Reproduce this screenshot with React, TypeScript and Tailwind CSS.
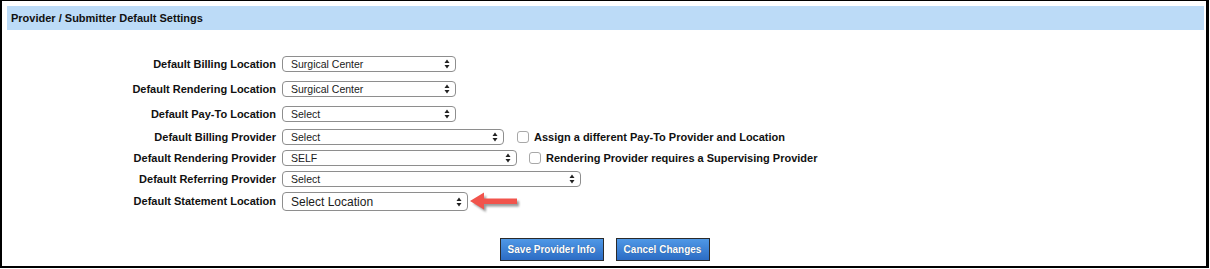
import React from 'react';

const font = "font-['Liberation_Sans',Arial,sans-serif]";

function Arrows() {
  return (
    <svg width="6" height="10" viewBox="0 0 6 10" className="shrink-0">
      <path d="M3 0.5 L5.5 4 L0.5 4 Z" fill="#222" />
      <path d="M3 9.5 L5.5 6 L0.5 6 Z" fill="#222" />
    </svg>
  );
}

function FakeSelect({ value, width, big }: { value: string; width: string; big?: boolean }) {
  return (
    <div
      className={`flex items-center justify-between rounded-[4px] border border-[#8e8e8e] bg-white pl-2 pr-[5px] text-[#1a1a1a] ${
        big ? 'h-[19px] text-[12px]' : 'h-[16px] text-[10.5px]'
      } ${width}`}
    >
      <span className="leading-none">{value}</span>
      <Arrows />
    </div>
  );
}

function Check({ label }: { label: string }) {
  return (
    <div className="flex items-center gap-[5px]">
      <div className="h-[12px] w-[12px] rounded-[3px] border border-[#a8a8a8] bg-white" />
      <span className="text-[11px] font-bold leading-none text-[#111]">{label}</span>
    </div>
  );
}

function Row({
  label,
  children,
  className = '',
}: {
  label: string;
  children: React.ReactNode;
  className?: string;
}) {
  return (
    <div className={`flex items-center ${className}`}>
      <div className="w-[269px] shrink-0 text-right text-[11px] font-bold leading-none text-[#111]">{label}</div>
      <div className="ml-[6px] flex items-center">{children}</div>
    </div>
  );
}

function RedArrow() {
  return (
    <svg width="56" height="26" viewBox="0 0 56 26" className="mt-[2px]">
      <defs>
        <filter id="sh" x="-20%" y="-40%" width="150%" height="200%">
          <feGaussianBlur stdDeviation="1.3" />
        </filter>
      </defs>
      <path
        d="M3 11 L16 3 L16 8.5 L49 8.5 L49 14 L16 14 L16 19.5 Z"
        fill="#444"
        opacity="0.55"
        transform="translate(2 2.5)"
        filter="url(#sh)"
      />
      <path d="M2 11 L16 2.5 L16 8.5 L49 8.5 L49 14 L16 14 L16 19.5 Z" fill="#f1544c" />
    </svg>
  );
}

export default function App() {
  return (
    <div className={`h-[269px] w-[1210px] bg-white ${font}`}>
      <div className="h-[268px] w-[1209px] border-b-2 border-l-2 border-r-[3px] border-t border-black bg-white pl-[5px] pr-[2px] pt-[5px]">
        <div className="flex h-[24px] items-center bg-[#bcdbf7] pl-[4px] text-[11px] font-bold text-[#111]">
          Provider / Submitter Default Settings
        </div>

        <div className="flex flex-col pt-[26px]">
          <Row label="Default Billing Location" className="h-[16px]">
            <FakeSelect value="Surgical Center" width="w-[174px]" />
          </Row>
          <Row label="Default Rendering Location" className="mt-[9px] h-[16px]">
            <FakeSelect value="Surgical Center" width="w-[174px]" />
          </Row>
          <Row label="Default Pay-To Location" className="mt-[9px] h-[16px]">
            <FakeSelect value="Select" width="w-[174px]" />
          </Row>
          <Row label="Default Billing Provider" className="mt-[7px] h-[16px]">
            <FakeSelect value="Select" width="w-[222px]" />
            <div className="ml-[13px]">
              <Check label="Assign a different Pay-To Provider and Location" />
            </div>
          </Row>
          <Row label="Default Rendering Provider" className="mt-[5px] h-[16px]">
            <FakeSelect value="SELF" width="w-[235px]" />
            <div className="ml-[12px]">
              <Check label="Rendering Provider requires a Supervising Provider" />
            </div>
          </Row>
          <Row label="Default Referring Provider" className="mt-[5px] h-[16px]">
            <FakeSelect value="Select" width="w-[299px]" />
          </Row>
          <Row label="Default Statement Location" className="mt-[5px] h-[19px]">
            <FakeSelect value="Select Location" width="w-[186px]" big />
            <RedArrow />
          </Row>
        </div>

        <div className="mt-[27px] flex justify-center gap-[12px] pr-[2px]">
          <button className="h-[23px] w-[104px] border border-[#2a2a2a] bg-gradient-to-b from-[#4f98e6] to-[#2c6cc4] text-[10px] font-bold text-white [text-shadow:0_0_1px_rgba(0,0,0,0.4)]">
            Save Provider Info
          </button>
          <button className="h-[23px] w-[94px] border border-[#2a2a2a] bg-gradient-to-b from-[#4f98e6] to-[#2c6cc4] text-[10px] font-bold text-white [text-shadow:0_0_1px_rgba(0,0,0,0.4)]">
            Cancel Changes
          </button>
        </div>
      </div>
    </div>
  );
}
